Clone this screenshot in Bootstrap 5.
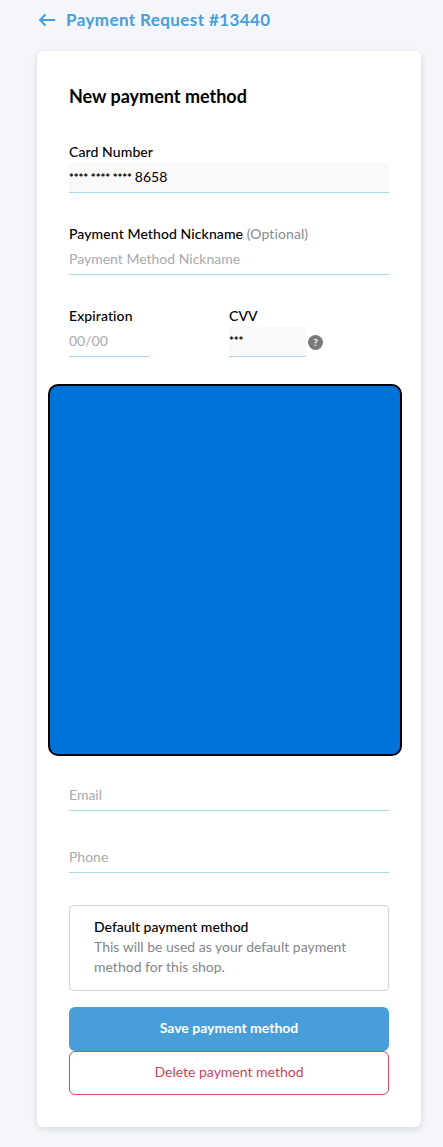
<!doctype html>
<html lang="en"><head><meta charset="utf-8">
<link href="https://cdn.jsdelivr.net/npm/bootstrap@5.3.0/dist/css/bootstrap.min.css" rel="stylesheet">
<style>
html,body{height:1147px;overflow:hidden}
body{background:#f5f6fb;font-family:Lato,"Liberation Sans",sans-serif;font-size:14px;color:#000;padding:0 22px 0 37px}
.back-row{height:51px;color:#479ed9;font-size:17px;font-weight:700;letter-spacing:.4px;gap:10px;padding:0 0 11px 1px}
.pay-panel{background:#fff;border-radius:6px;box-shadow:0 2px 6px rgba(60,70,100,.18);padding:32px;height:1076px}
.pay-title{font-size:18px;font-weight:700;line-height:26px;margin:0 0 34px}
.fld-label{display:block;font-size:14px;font-weight:500;line-height:18px;padding-bottom:2px;margin:0;letter-spacing:.1px}
.fld-opt{color:#8b8b8b;font-weight:400}
.fld-input.form-control{border:0;border-bottom:1px solid #a8dbe8;border-radius:0;padding:0 0 2px;height:30px;font-size:14px;background:transparent;color:#000;box-shadow:none}
.fld-input.form-control::placeholder{color:#a9a9ad}
.fld-input.filled{background:#f9f9f9;line-height:27px}
.mask-stars{font-size:11.500px;font-weight:700;letter-spacing:-.1px;margin-right:3px}
.mask-stars-top{display:block;line-height:27px}
.fld-short{width:80px}
.fld-cvv{width:77px}
.cvv-col{margin-left:80px}
.help-dot{width:15px;height:15px;border-radius:50%;background:#7b7b7b;color:#fff;font-size:10px;font-weight:700;line-height:15px;text-align:center;margin:0 0 7px 2px}
.blue-frame{background:#0073d9;border:2px solid #000;border-radius:10px;height:372px;margin:27px -13px 0 -21px}
.def-box{border:1px solid #d2d2d6;border-radius:4px;height:86px;padding:11px 24px;line-height:20px;margin:32px 0 16px}
.def-title{font-size:14px;font-weight:500}
.def-text{color:#85858a;font-size:14px}
.act-btn.btn{height:44px;font-size:14px;display:block;width:100%;border-radius:6px;padding:0 0 4px}
.act-save,.act-save:hover{background:#479ed9;border:0;color:#fff;font-weight:700}
.act-del,.act-del:hover{background:#fff;border:1px solid #d2495f;color:#cf3f5f}
.email-wrap{margin-top:25px}
</style></head><body>
<div class="back-row d-flex align-items-center">
<svg width="18" height="14" viewBox="0 0 18 14" fill="none" stroke="#479ed9" stroke-width="2"><path d="M17 7H2M7.5 1.5 2 7l5.500 5.500"/></svg>
<span>Payment Request #13440</span></div>
<main class="pay-panel">
<h1 class="pay-title">New payment method</h1>
<div class="mb-4 pb-2"><label class="fld-label">Card Number</label>
<div class="form-control fld-input filled"><span class="mask-stars">**** **** ****</span>8658</div></div>
<div class="mb-4 pb-2"><label class="fld-label">Payment Method Nickname <span class="fld-opt">(Optional)</span></label>
<input class="form-control fld-input" placeholder="Payment Method Nickname"></div>
<div class="d-flex">
<div><label class="fld-label">Expiration</label><input class="form-control fld-input fld-short" placeholder="00/00"></div>
<div class="cvv-col"><label class="fld-label">CVV</label>
<div class="d-flex align-items-end"><div class="form-control fld-input filled fld-cvv"><span class="mask-stars mask-stars-top">***</span></div><div class="help-dot">?</div></div></div>
</div>
<div class="blue-frame"></div>
<div class="email-wrap"><input class="form-control fld-input" placeholder="Email"></div>
<div class="mt-4 pt-2"><input class="form-control fld-input" placeholder="Phone"></div>
<div class="def-box"><div class="def-title">Default payment method</div>
<div class="def-text">This will be used as your default payment method for this shop.</div></div>
<button class="btn act-btn act-save" type="button">Save payment method</button>
<button class="btn act-btn act-del" type="button">Delete payment method</button>
</main>
<script src="https://cdn.jsdelivr.net/npm/bootstrap@5.3.0/dist/js/bootstrap.bundle.min.js"></script>
</body></html>
